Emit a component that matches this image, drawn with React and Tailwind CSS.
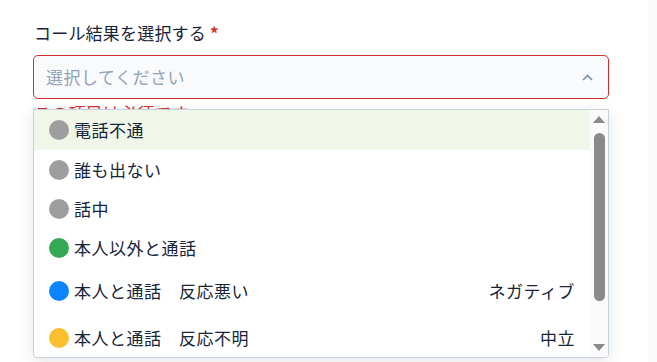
import React from "react";

const items = [
  { label: "電話不通", color: "#9e9e9e", h: "h-[40px]", active: true },
  { label: "誰も出ない", color: "#9e9e9e", h: "h-[39px]" },
  { label: "話中", color: "#9e9e9e", h: "h-[39px]" },
  { label: "本人以外と通話", color: "#34a853", h: "h-[40px]" },
  { label: "本人と通話　反応悪い", color: "#0a84ff", h: "h-[46px]", right: "ネガティブ" },
  { label: "本人と通話　反応不明", color: "#fbbf2f", h: "h-[47px]", right: "中立" },
];

export default function App() {
  return (
    <div
      className="flex w-[657px] h-[362px] overflow-hidden bg-white text-[#17253a]"
      style={{ fontFamily: '"Noto Sans CJK JP", "Noto Sans", sans-serif' }}
    >
      <div className="flex-1 pl-[33px] pt-[20px]">
        <div className="flex items-center h-[26px] pl-[1px] text-[17px] tracking-[0.2px]">
          <span>コール結果を選択する</span>
          <span className="ml-[4px] text-[#d32f2f] font-bold">*</span>
        </div>
        <div className="relative w-[576px] mt-[9px]">
          <div className="flex items-center justify-between h-[44px] rounded-[5px] border border-[#d32f2f] bg-[#f8fafc] pl-[12px] pr-[15px]">
            <span className="text-[17px] tracking-[0.5px] text-[#94a3b8]">選択してください</span>
            <svg width="11" height="7" viewBox="0 0 11 7" fill="none">
              <path d="M1 6 L5.5 1.5 L10 6" stroke="#7b8fa6" strokeWidth="1.6" />
            </svg>
          </div>
          <div className="mt-[2px] pl-[1px] text-[17px] tracking-[0.2px] text-[#d32f2f] leading-[24px]">
            この項目は必須です
          </div>
          <div className="absolute left-0 top-[54px] w-[576px] h-[249px] flex rounded-b-[4px] border border-[#c8d2dc] bg-white shadow-[0_4px_16px_rgba(30,41,59,0.12)] overflow-hidden">
            <div className="flex-1 flex flex-col">
              {items.map((it) => (
                <div
                  key={it.label}
                  className={`${it.h} shrink-0 flex items-center justify-between pl-[15px] pr-[15px] ${it.active ? "bg-[#f0f7e8]" : ""}`}
                >
                  <div className="flex items-center gap-[5px]">
                    <span className="w-[20px] h-[20px] rounded-full" style={{ backgroundColor: it.color }} />
                    <span className="text-[17px] tracking-[0.5px]">{it.label}</span>
                  </div>
                  {it.right && <span className="text-[17px] tracking-[0.5px]">{it.right}</span>}
                </div>
              ))}
            </div>
            <div className="w-[18px] bg-[#fafafa] flex flex-col items-center pt-[6px] pb-[6px]">
              <svg width="12" height="7" viewBox="0 0 12 7">
                <path d="M6 0 L12 7 L0 7 Z" fill="#8a8a8a" />
              </svg>
              <div className="mt-[10px] w-[11px] h-[168px] rounded-full bg-[#8a8a8a]" />
              <div className="flex-1" />
              <svg width="12" height="7" viewBox="0 0 12 7">
                <path d="M0 0 L12 0 L6 7 Z" fill="#8a8a8a" />
              </svg>
            </div>
          </div>
        </div>
      </div>
      <div className="w-[9px] h-full bg-[#fafafa]" />
    </div>
  );
}
